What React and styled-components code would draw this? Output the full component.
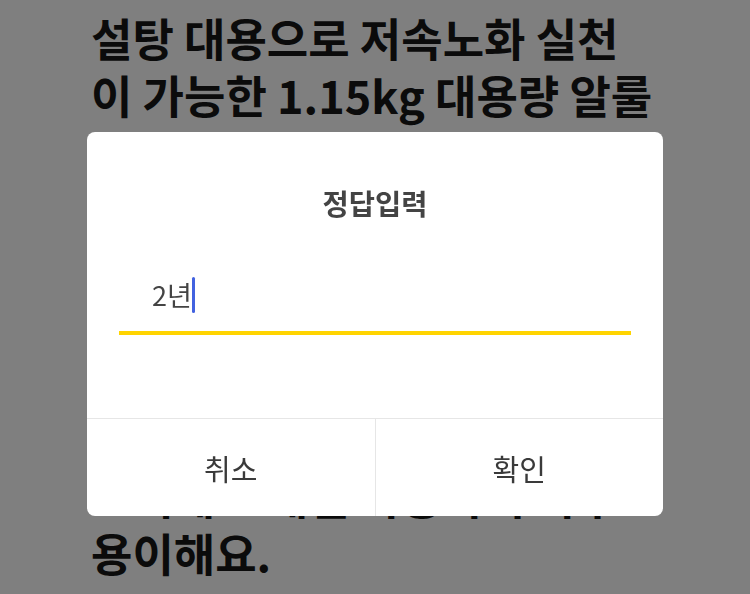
import React from "react";
import styled, { createGlobalStyle } from "styled-components";

const Global = createGlobalStyle`
  html, body { margin: 0; padding: 0; background: #ffffff; }
  body { font-family: "Noto Sans CJK KR", "Noto Sans", sans-serif; overflow: hidden; }
`;

const Page = styled.main`
  width: 750px;
  height: 594px;
  padding: 9px 0 0 91px;
  box-sizing: border-box;
  overflow: hidden;
`;

const Question = styled.h1`
  margin: 0;
  font-size: 45px;
  font-weight: 700;
  line-height: 57.2px;
  letter-spacing: 0;
  color: #161616;
`;

const Line = styled.span`
  display: block;
  white-space: nowrap;
`;

const Overlay = styled.div`
  position: fixed;
  inset: 0;
  background: rgba(0, 0, 0, 0.5);
  display: flex;
  justify-content: center;
  align-items: flex-start;
  padding-top: 132px;
  box-sizing: border-box;
`;

const Dialog = styled.div`
  width: 576px;
  height: 384px;
  background: #ffffff;
  border-radius: 8px;
  overflow: hidden;
  display: flex;
  flex-direction: column;
`;

const Body = styled.div`
  height: 286px;
  padding: 53px 32px 0;
  box-sizing: border-box;
  display: flex;
  flex-direction: column;
`;

const Title = styled.h2`
  margin: 0;
  text-align: center;
  font-size: 28.5px;
  line-height: 36px;
  font-weight: 700;
  letter-spacing: 0;
  color: #444444;
`;

const Field = styled.div`
  margin-top: 46px;
  height: 68px;
  box-sizing: border-box;
  padding: 0 33px 8px;
  border-bottom: 4px solid #ffd400;
  display: flex;
  align-items: center;
`;

const Value = styled.span`
  font-size: 27px;
  line-height: 36px;
  color: #444444;
  letter-spacing: 0;
`;

const Caret = styled.span`
  display: inline-block;
  width: 3px;
  height: 36px;
  border-radius: 1.5px;
  background: #4262e0;
`;

const Footer = styled.div`
  flex: 1;
  display: flex;
  border-top: 1px solid #e6e6e6;
`;

const Action = styled.button`
  flex: 1;
  border: 0;
  border-left: ${(p) => (p.$divided ? "1px solid #e6e6e6" : "0")};
  background: transparent;
  padding: 0;
  font-family: inherit;
  font-size: 29px;
  letter-spacing: 0;
  color: #3a3a3a;
  display: flex;
  align-items: center;
  justify-content: center;
`;

const lines = [
  "설탕 대용으로 저속노화 실천",
  "이 가능한 1.15kg 대용량 알룰",
  "로스는 설탕과 비슷한 단맛을",
  "내면서도 칼로리가 거의 없어",
  "혈당 걱정을 줄여 주는 건강한",
  "감미료예요. 요리와 베이킹 등",
  "다양한 곳에 부담 없이 쓸 수",
  "있고 대용량이라 오래 두고",
  "쓰기에도 매일 사용하기 아주",
  "용이해요.",
];

export default function App() {
  return (
    <>
      <Global />
      <Page>
        <Question>
          {lines.map((l, i) => (
            <Line key={i}>{l}</Line>
          ))}
        </Question>
      </Page>
      <Overlay>
        <Dialog role="dialog">
          <Body>
            <Title>정답입력</Title>
            <Field>
              <Value>2년</Value>
              <Caret />
            </Field>
          </Body>
          <Footer>
            <Action>취소</Action>
            <Action $divided>확인</Action>
          </Footer>
        </Dialog>
      </Overlay>
    </>
  );
}
